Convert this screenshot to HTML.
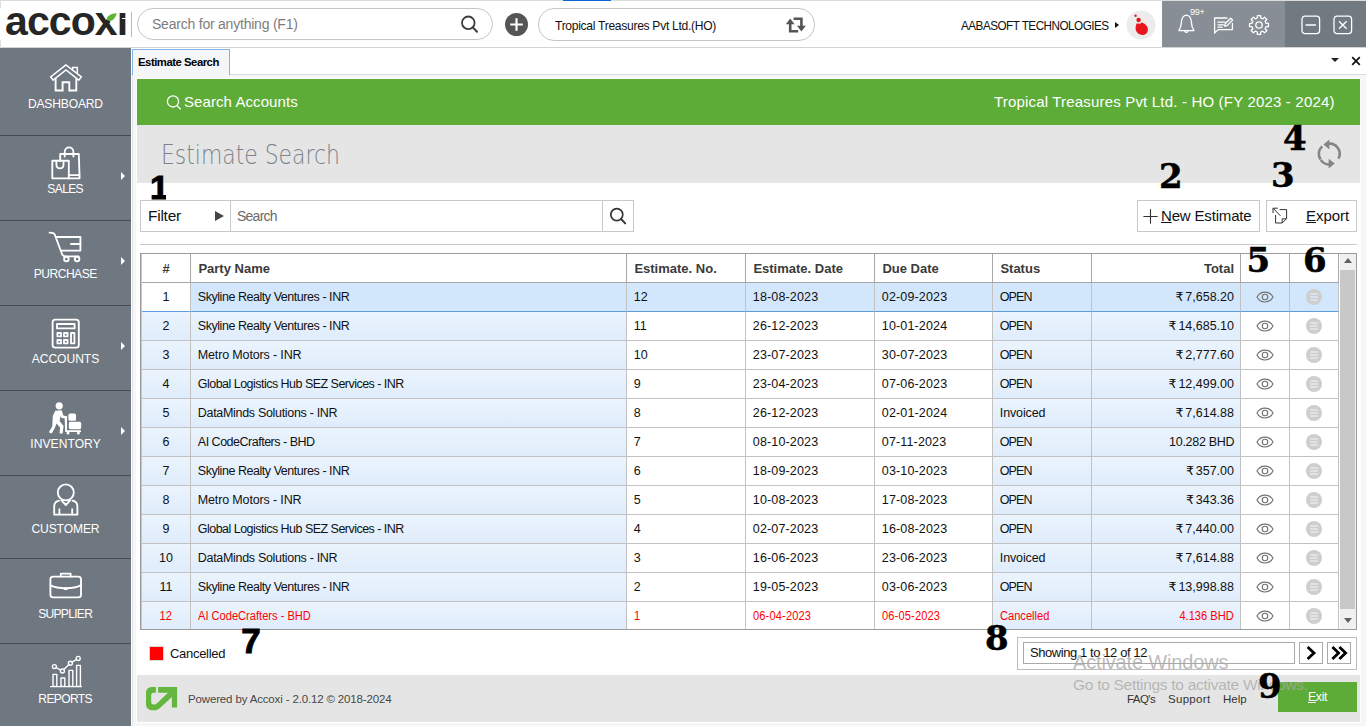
<!DOCTYPE html>
<html lang="en">
<head>
<meta charset="utf-8">
<title>Accoxi - Estimate Search</title>
<style>
*{box-sizing:border-box;margin:0;padding:0}
html,body{width:1366px;height:726px;overflow:hidden;background:#f5f6f8}
body{position:relative;font-family:"Liberation Sans","DejaVu Sans",sans-serif;color:#111;font-size:12.5px}
#app>div,#app>span,#app>svg{position:absolute}
.t{white-space:pre;line-height:1}
#topbar{left:0;top:0;width:1366px;height:48px;background:#fff;border-bottom:1px solid #d4d4d4;border-top:1px solid #dcdcdc}
#logo{left:5px;top:-2px;font-weight:bold;font-size:41px;letter-spacing:-0.9px;color:#262626;line-height:46px}
#logosep{left:131px;top:12px;width:1px;height:25px;background:#b9b9b9}
.pill{border:1px solid #c6c6c6;border-radius:16px;background:#fff}
#gsearch{left:137px;top:8px;width:356px;height:32px}
#company{left:538px;top:8px;width:277px;height:33px}
#bluebar{left:563px;top:0;width:48px;height:1px;background:#0a68d0}
#tr1{left:1162px;top:1px;width:123px;height:46px;background:#878e96}
#tr2{left:1285px;top:1px;width:81px;height:46px;background:#717981}
#side{left:0;top:48px;width:131px;height:678px;background:#6f7780}
.sdiv{left:0;width:131px;height:1px;background:#474b50}
.slabel{left:0;width:131px;text-align:center;color:#fff;font-size:13px;line-height:1;white-space:pre;transform:scaleX(0.93)}
.sarrow{left:121px;width:0;height:0;border-left:4px solid #fff;border-top:4px solid transparent;border-bottom:4px solid transparent}
#tabstrip{left:131px;top:48px;width:1235px;height:27px;background:#fff;border-bottom:1px solid #dadbdd}
#tab{left:132px;top:49px;width:98px;height:26px;background:#f5f6f8;border:1px solid #7eb4ea;border-bottom:none}
#panel{left:136px;top:78px;width:1225px;height:645px;background:#fff}
#green{left:137px;top:79px;width:1223px;height:46px;background:#5dac38}
#titleband{left:137px;top:125px;width:1223px;height:58px;background:#e5e5e5}
#footband{left:137px;top:675px;width:1223px;height:47px;background:#e5e5e5}
.box{border:1px solid #c8c8c8;background:#fff}
#grid{left:140px;top:253px;width:1217px;height:377px;border:1px solid #9b9b9b;background:#fff}
#gridl{left:141px;top:254px;width:1px;height:375px;background:#c6c6c6}
.cell{height:29px;border-right:1px solid #c2c2c2;border-bottom:1px solid #c2c2c2;line-height:28px;white-space:pre;overflow:hidden;padding-left:6.8px;font-size:12.5px;color:#111;background:#fff}
.hd{font-weight:bold;font-size:13px;line-height:29px;color:#3a3a3a;padding-left:7.4px;border-bottom:1px solid #a8a8a8;border-right:1px solid #a8a8a8}
.alt{background:linear-gradient(#ebf4fd,#dfecfb)}
.sel{background:#d3e7fc;border-bottom:1px solid #5c9ee0}
.selw{border-bottom:1px solid #5c9ee0}
.c{text-align:center;padding-left:0}
.r{text-align:right;padding-left:0;padding-right:6px}
.ic{padding-left:0;text-align:center}
.ic svg{vertical-align:middle;position:relative;top:-1px}
.red{color:#f00}
.kd,.ku{letter-spacing:0.15px}
.ru{font-size:12.5px;margin-right:-1.6px;font-family:'DejaVu Sans','Liberation Sans',sans-serif}
.rx{display:inline-block;font-size:12px;transform:scaleX(0.925);transform-origin:0 50%}
.r .rx{transform-origin:100% 50%}
.c .rx{transform-origin:50% 50%}
.num{font-family:"DejaVu Serif","Liberation Serif",serif;font-weight:bold;color:#000;line-height:1;white-space:pre;;font-size:34px;-webkit-text-stroke:0.5px #000}
.numsans{font-weight:bold;color:#000;line-height:1;white-space:pre;-webkit-text-stroke:1px #000}

.last{height:27px;border-bottom:none;line-height:28px}

</style>
</head>
<body>
<div id="app">
<!-- TOPBAR -->
<div id="topbar"></div><div id="bluebar"></div>
<div style="left:0;top:0;width:1px;height:8px;background:#dedede"></div><div style="left:0;top:40px;width:1px;height:8px;background:#dedede"></div>
<span id="logo" class="t">accoxi</span>
<div style="left:117px;top:2px;width:10px;height:10.6px;background:#fff"></div>
<div style="left:122.2px;top:18px;width:5px;height:1.4px;background:#fff"></div>
<svg id="leaf" style="left:100px;top:5px" width="22" height="32" viewBox="0 0 22 32"><path d="M5 7.7 H19.05 V29.5 H18.1 Z" fill="#fff"/><path d="M6.8 14.4 C7.2 11 10 8.4 16.9 8.2 C15.6 12 13 16.4 9.4 15.9 C8.2 15.7 7.4 15.2 6.8 14.4 Z" fill="#5cb535"/></svg>
<div id="logosep"></div>
<div id="gsearch" class="pill"></div>
<span class="t" style="left:152px;top:17px;font-size:14px;color:#7d7d7d;letter-spacing:-0.22px">Search for anything (F1)</span>
<svg style="left:458px;top:13px" width="22" height="22" viewBox="0 0 22 22"><circle cx="10.3" cy="9.8" r="6.3" fill="none" stroke="#3d3d3d" stroke-width="1.8"/><path d="M14.8 14.4 L19 18.8" stroke="#3d3d3d" stroke-width="2" stroke-linecap="round"/></svg>
<svg style="left:504px;top:12px" width="25" height="25" viewBox="0 0 25 25"><circle cx="12.5" cy="12.5" r="11.5" fill="#555"/><path d="M12.5 6.2 V18.8 M6.2 12.5 H18.8" stroke="#fff" stroke-width="2.2"/></svg>
<div id="company" class="pill"></div>
<span class="t" style="left:555px;top:19px;font-size:13px;color:#111;transform-origin:0 0;transform:scaleX(0.93);letter-spacing:-0.32px">Tropical Treasures Pvt Ltd.(HO)</span>
<svg style="left:785px;top:15px" width="22" height="20" viewBox="0 0 22 20"><g fill="none" stroke="#555" stroke-width="2.6" stroke-linejoin="round"><path d="M5.2 16.2 H13.2 M5.2 17.4 V8.2"/><path d="M16.4 2.6 V11.8 M16.4 3.8 H8.6"/></g><path d="M0.8 9.2 L5.2 3.6 L9.6 9.2 Z M12 10.8 L16.4 16.6 L20.8 10.8 Z" fill="#555"/></svg>
<span class="t" style="left:961px;top:19px;font-size:13px;color:#111;transform-origin:0 0;transform:scaleX(0.9);letter-spacing:-0.56px">AABASOFT TECHNOLOGIES</span>
<div style="left:1115px;top:21.5px;width:0;height:0;border-left:4.5px solid #111;border-top:3.5px solid transparent;border-bottom:3.5px solid transparent"></div>
<svg style="left:1126px;top:10px" width="30" height="30" viewBox="0 0 30 30"><circle cx="15" cy="15" r="14.5" fill="#ececec"/><path d="M11.6 12.6 C14.4 11.4 19.4 12.6 21.4 17 C23 21 20.6 24.8 17 25 C12.6 25.2 9.4 22 9.6 17.6 C9.7 15.4 10.4 13.6 11.6 12.6 Z" fill="#e8161c"/><circle cx="13" cy="10.6" r="3.1" fill="#ececec"/><circle cx="12.6" cy="10" r="2.2" fill="#e8161c"/><circle cx="9.6" cy="5.8" r="1.2" fill="#e8161c"/></svg>
<div id="tr1"></div><div id="tr2"></div>
<svg style="left:1176px;top:13px" width="22" height="23" viewBox="0 0 22 23"><g fill="none" stroke="#fff" stroke-width="1.3" stroke-linejoin="round" stroke-linecap="round"><path d="M10.4 2.2 C6.6 2.6 5.6 6 5.4 9.4 C5.2 13 4.6 15.4 2.8 17.6 H18 C16.2 15.4 15.6 13 15.4 9.4 C15.2 6 14.2 2.6 10.4 2.2 Z"/><path d="M8.8 18.2 C9 19.8 11.8 19.8 12 18.2"/></g></svg>
<span class="t" style="left:1190px;top:8px;font-size:9px;color:#fff;letter-spacing:-0.2px">99+</span>
<svg style="left:1213px;top:16px" width="22" height="19" viewBox="0 0 22 19"><g fill="none" stroke="#fff" stroke-width="1.3" stroke-linejoin="round" stroke-linecap="round"><path d="M14 2 H1.6 V17 L5.2 13.6 H19.4 V7.4"/><path d="M5 6.2 H12 M5 8.8 H10.4 M5 11.2 H9"/><path d="M11.6 10.2 L12.2 7.8 L17.6 2.2 L19.6 4 L14.2 9.6 Z"/></g></svg>
<svg style="left:1247px;top:13px" width="24" height="24" viewBox="0 0 24 24"><path d="M10.35 2.54 L13.65 2.54 L13.68 5.00 L15.76 5.86 L17.52 4.15 L19.85 6.48 L18.14 8.24 L19.00 10.32 L21.46 10.35 L21.46 13.65 L19.00 13.68 L18.14 15.76 L19.85 17.52 L17.52 19.85 L15.76 18.14 L13.68 19.00 L13.65 21.46 L10.35 21.46 L10.32 19.00 L8.24 18.14 L6.48 19.85 L4.15 17.52 L5.86 15.76 L5.00 13.68 L2.54 13.65 L2.54 10.35 L5.00 10.32 L5.86 8.24 L4.15 6.48 L6.48 4.15 L8.24 5.86 L10.32 5.00 Z" fill="none" stroke="#fff" stroke-width="1.3" stroke-linejoin="round"/><circle cx="12" cy="12" r="3.2" fill="none" stroke="#fff" stroke-width="1.3"/></svg>
<svg style="left:1301px;top:15px" width="20" height="20" viewBox="0 0 20 20"><rect x="1" y="1.2" width="17.6" height="17.4" rx="3" fill="none" stroke="#fff" stroke-width="1.3"/><path d="M4.6 10 H15" stroke="#fff" stroke-width="1.5"/></svg>
<svg style="left:1333px;top:15px" width="20" height="20" viewBox="0 0 20 20"><rect x="1" y="1.2" width="17.6" height="17.4" rx="3" fill="none" stroke="#fff" stroke-width="1.3"/><path d="M6 6.2 L13.6 13.8 M13.6 6.2 L6 13.8" stroke="#fff" stroke-width="1.3"/></svg>
<!-- SIDEBAR -->
<div id="side"></div>
<div style="left:131px;top:75px;width:1px;height:651px;background:#fff"></div><div style="left:132px;top:75px;width:1px;height:651px;background:#e3e4e7"></div>
<div class="sdiv" style="top:135px"></div>
<div class="sdiv" style="top:220px"></div>
<div class="sdiv" style="top:305px"></div>
<div class="sdiv" style="top:390px"></div>
<div class="sdiv" style="top:475px"></div>
<div class="sdiv" style="top:558px"></div>
<div class="sdiv" style="top:643px"></div>
<span class="slabel" style="top:97px;letter-spacing:-0.19px;padding-right:0.19px">DASHBOARD</span>
<span class="slabel" style="top:182px;letter-spacing:-0.71px;padding-right:0.71px">SALES</span>
<span class="slabel" style="top:267px;letter-spacing:-0.56px;padding-right:0.56px">PURCHASE</span>
<span class="slabel" style="top:352px;letter-spacing:-0.05px;padding-right:0.05px">ACCOUNTS</span>
<span class="slabel" style="top:437px;letter-spacing:0.05px;padding-right:0.00px">INVENTORY</span>
<span class="slabel" style="top:522px;letter-spacing:-0.13px;padding-right:0.13px">CUSTOMER</span>
<span class="slabel" style="top:607px;letter-spacing:-0.78px;padding-right:0.78px">SUPPLIER</span>
<span class="slabel" style="top:692px;letter-spacing:-0.71px;padding-right:0.71px">REPORTS</span>
<div class="sarrow" style="top:172px"></div>
<div class="sarrow" style="top:257px"></div>
<div class="sarrow" style="top:342px"></div>
<div class="sarrow" style="top:427px"></div>
<svg style="left:48px;top:63px" width="36" height="30" viewBox="0 0 36 30"><g fill="none" stroke="#fff" stroke-width="1.5" stroke-linejoin="miter" stroke-linecap="butt"><path d="M17.95 1.9 L2.7 13.9 L5.1 17.2 L17.95 6.9 L30.8 17.2 L33.4 13.9 Z"/><path d="M24.6 7.2 V4.4 H29.3 V10.6"/><path d="M7.6 15.4 V27.5 H14.6 V19.3 H21.3 V27.5 H28.3 V15.4" stroke-width="1.9"/></g></svg>
<svg style="left:50px;top:145px" width="32" height="36" viewBox="0 0 32 36"><g fill="none" stroke="#fff" stroke-width="1.85" stroke-linejoin="round" stroke-linecap="round"><path d="M10.2 15.7 V9 H28.8 L29.6 33.4 H18.8"/><path d="M14.7 11.5 V7 C14.7 0.9 23.4 0.9 23.4 7 V11.5"/><path d="M2.3 15.7 H18.8 V33.4 H2.3 Z"/><path d="M6.4 17 V19.4 C6.4 24.6 13.5 24.6 13.5 19.4 V17"/><path d="M18.8 30.1 H29.3"/></g></svg>
<svg style="left:48px;top:231px" width="38" height="34" viewBox="0 0 38 34"><g fill="none" stroke="#fff" stroke-width="1.85" stroke-linejoin="round" stroke-linecap="round"><path d="M1.6 1.6 L5.4 2.2 L6.6 3.2 L14.4 24 L16.6 25.4 H30.6"/><path d="M8.6 6 H32.4 V19.6 H13.4"/><path d="M32.4 13 H22.9"/><circle cx="18.4" cy="28" r="2.3"/><circle cx="29.1" cy="28" r="2.3"/></g></svg>
<svg style="left:50px;top:316.6px" width="32" height="34" viewBox="0 0 32 34"><g fill="none" stroke="#fff" stroke-width="1.85" stroke-linejoin="round" stroke-linecap="round"><rect x="2.6" y="2.6" width="26.2" height="28" rx="2.6"/><rect x="7" y="7" width="17.6" height="4.4"/><rect x="7.4" y="16" width="3.6" height="3.4"/><rect x="14" y="16" width="3.6" height="3.4"/><rect x="7.4" y="23" width="3.6" height="3.4"/><rect x="14" y="23" width="3.6" height="3.4"/><rect x="21" y="16" width="3.4" height="10.4"/></g></svg>
<svg style="left:48px;top:401px" width="36" height="34" viewBox="0 0 36 34" fill="#fff"><circle cx="11.2" cy="4.8" r="3.6"/><path d="M7.2 9.8 L13.6 9.2 L15.4 14.4 L19.4 15.4 L19 17.8 L13.6 17 L12.6 15 L11.6 20 L15.6 25 L14.6 32.6 L11.6 32.6 L12 26.4 L8.6 22.6 L6.6 27.6 L3.6 32.6 L0.8 31.2 L4.2 25.4 L4.8 15 Z"/><rect x="20.4" y="12.6" width="7.6" height="7.2" rx="1.6"/><rect x="20.8" y="20.8" width="12.4" height="7.4" rx="1.6"/><path d="M16.6 15.4 H19 V29.2 H33 V31 H17.2 Z"/><circle cx="20" cy="32" r="1.5"/><circle cx="30.4" cy="32" r="1.5"/></svg>
<svg style="left:50px;top:482px" width="32" height="36" viewBox="0 0 32 36"><g fill="none" stroke="#fff" stroke-width="1.85" stroke-linejoin="round" stroke-linecap="round"><circle cx="15.8" cy="10.4" r="8"/><path d="M9 18.6 C5.2 19.4 4.2 21.4 4.2 24.4 V32.6 H27.4 V24.4 C27.4 21.4 26.4 19.4 22.6 18.6"/><path d="M11.4 18.4 L15.8 23 L20.2 18.4"/><path d="M9.4 27.2 V32.4 M22.2 27.2 V32.4"/></g></svg>
<svg style="left:48px;top:570px" width="36" height="30" viewBox="0 0 36 30"><g fill="none" stroke="#fff" stroke-width="1.85" stroke-linejoin="round" stroke-linecap="round"><rect x="2.4" y="6.6" width="30.6" height="20.8" rx="2.6"/><path d="M12.8 6.4 V3.6 H22.6 V6.4"/><path d="M2.6 15.4 C10 19.2 25.4 19.2 32.8 15.4"/><path d="M16.6 18.6 H18.8" stroke-width="2.6"/></g></svg>
<svg style="left:48px;top:654px" width="36" height="36" viewBox="0 0 36 36"><g fill="none" stroke="#fff" stroke-width="1.4" stroke-linejoin="round" stroke-linecap="round"><path d="M2.6 32.6 H33.4"/><rect x="5" y="20.4" width="3.8" height="12"/><rect x="13" y="24" width="3.8" height="8.4"/><rect x="21" y="16.4" width="3.8" height="16"/><rect x="28.6" y="11.4" width="3.8" height="21"/><circle cx="6.4" cy="12.6" r="2"/><circle cx="14.4" cy="17" r="2"/><circle cx="22.4" cy="9.2" r="2"/><circle cx="30.2" cy="4.4" r="2"/><path d="M8.2 13.6 L12.6 16 M15.8 15.6 L21 10.6 M24 8.2 L28.6 5.4"/></g></svg>
<!-- TABSTRIP -->
<div id="tabstrip"></div><div id="tab"></div>
<span class="t" style="left:138px;top:57px;font-size:11.3px;font-weight:bold;color:#000;letter-spacing:-0.47px">Estimate Search</span>
<div style="left:1331px;top:58px;width:0;height:0;border-top:4px solid #222;border-left:4px solid transparent;border-right:4px solid transparent"></div>
<svg style="left:1350px;top:55px" width="12" height="12" viewBox="0 0 12 12"><path d="M2.2 2.2 L9.8 9.8 M9.8 2.2 L2.2 9.8" stroke="#111" stroke-width="1.7"/></svg>
<!-- PANEL -->
<div id="panel"></div><div id="green"></div><div id="titleband"></div><div id="footband"></div>
<svg style="left:165px;top:93px" width="18" height="18" viewBox="0 0 18 18"><circle cx="8" cy="8.4" r="5.6" fill="none" stroke="#fff" stroke-width="1.3"/><path d="M12 12.6 L15.4 16" stroke="#fff" stroke-width="1.3" stroke-linecap="round"/></svg>
<span class="t" style="left:184px;top:94px;font-size:15px;color:#fff;letter-spacing:0.08px">Search Accounts</span>
<span class="t" style="left:994px;top:94px;font-size:15px;color:#fff;letter-spacing:0.18px">Tropical Treasures Pvt Ltd. - HO (FY 2023 - 2024)</span>
<span class="t" style="left:161px;top:142px;font-family:'DejaVu Sans','Liberation Sans',sans-serif;font-weight:200;font-size:26px;color:#7b838b;transform:scaleX(0.842);transform-origin:0 0">Estimate Search</span>
<svg style="left:1314px;top:139px" width="30" height="30" viewBox="0 0 30 30"><g fill="none" stroke="#858585" stroke-width="2.6"><path d="M6.6 20.6 A10 10 0 0 1 8.2 7.4"/><path d="M13.4 5 A10 10 0 0 1 24.4 19.6" /><path d="M6.8 21 A10 10 0 0 0 18 25"/></g><path d="M15.4 0.6 L15.4 10.4 L9.4 5.4 Z" fill="#858585"/><path d="M14.6 19.8 L14.6 29.6 L20.8 24.6 Z" fill="#858585"/></svg>
<div class="box" style="left:140px;top:200px;width:494px;height:32px"></div>
<div style="left:230px;top:201px;width:1px;height:30px;background:#c8c8c8"></div>
<div style="left:602px;top:201px;width:1px;height:30px;background:#c8c8c8"></div>
<span class="t" style="left:148px;top:208px;font-size:15.5px;color:#111;letter-spacing:-0.25px">Filter</span>
<div style="left:215px;top:211px;width:0;height:0;border-left:9px solid #444;border-top:5px solid transparent;border-bottom:5px solid transparent"></div>
<span class="t" style="left:237px;top:209px;font-size:14px;color:#6a6a6a;letter-spacing:-0.75px">Search</span>
<svg style="left:607px;top:205px" width="22" height="22" viewBox="0 0 22 22"><circle cx="9.8" cy="9.6" r="6" fill="none" stroke="#333" stroke-width="1.7"/><path d="M14 14 L18.2 18.4" stroke="#333" stroke-width="1.9" stroke-linecap="round"/></svg>
<div class="box" style="left:1137px;top:200px;width:123px;height:32px"></div>
<svg style="left:1142px;top:208px" width="17" height="17" viewBox="0 0 17 17"><path d="M8.5 1.2 V15.8 M1.4 8.5 H15.6" stroke="#333" stroke-width="1.1"/></svg>
<span class="t" style="left:1161px;top:208px;font-size:15px;color:#111;letter-spacing:-0.17px"><u>N</u>ew Estimate</span>
<div class="box" style="left:1266px;top:200px;width:91px;height:32px"></div>
<svg style="left:1271px;top:206px" width="18" height="19" viewBox="0 0 18 19"><g fill="none" stroke="#333" stroke-width="1"><path d="M8.6 3.6 H15.6 V12.6 L11.2 17 H4.6 V9"/><path d="M15.4 12.8 H11.2 V17"/><path d="M2.2 2.4 L9.4 9.8 M2 7 V2.2 H6.8"/></g></svg>
<span class="t" style="left:1306px;top:208px;font-size:15px;color:#111;letter-spacing:-0.05px"><u>E</u>xport</span>
<div style="left:140px;top:244px;width:1217px;height:1px;background:#c9c9c9"></div>
<!-- TABLE -->
<div id="grid"></div><div id="gridl"></div>
<div class="cell hd c" style="left:142px;top:254px;width:49px">#</div>
<div class="cell hd" style="left:191px;top:254px;width:436px">Party Name</div>
<div class="cell hd" style="left:627px;top:254px;width:119px">Estimate. No.</div>
<div class="cell hd" style="left:746px;top:254px;width:129px">Estimate. Date</div>
<div class="cell hd" style="left:875px;top:254px;width:118px">Due Date</div>
<div class="cell hd" style="left:993px;top:254px;width:99px">Status</div>
<div class="cell hd r" style="left:1092px;top:254px;width:149px">Total</div>
<div class="cell hd" style="left:1241px;top:254px;width:49px"></div>
<div class="cell hd" style="left:1290px;top:254px;width:49px"></div>
<div class="cell selw c kn" style="left:142px;top:283px;width:49px">1</div>
<div class="cell sel kp" style="left:191px;top:283px;width:436px"><span style="letter-spacing:-0.454px">Skyline Realty Ventures - INR</span></div>
<div class="cell sel ke" style="left:627px;top:283px;width:119px">12</div>
<div class="cell sel kd" style="left:746px;top:283px;width:129px">18-08-2023</div>
<div class="cell sel ku" style="left:875px;top:283px;width:118px">02-09-2023</div>
<div class="cell sel ks" style="left:993px;top:283px;width:99px"><span style="letter-spacing:-0.934px">OPEN</span></div>
<div class="cell sel r kt" style="left:1092px;top:283px;width:149px"><span class="ru">₹</span> 7,658.20</div>
<div class="cell sel ic kv" style="left:1241px;top:283px;width:49px"><svg width="18" height="12" viewBox="0 0 18 12"><path d="M1 6 C4.4 -0.6 13.6 -0.6 17 6 C13.6 12.6 4.4 12.6 1 6 Z" fill="none" stroke="#727272" stroke-width="1.15" stroke-linejoin="round"/><circle cx="9" cy="6" r="2.75" fill="none" stroke="#727272" stroke-width="1.15"/></svg></div>
<div class="cell sel ic km" style="left:1290px;top:283px;width:49px"><svg width="16" height="16" viewBox="0 0 16 16"><circle cx="8" cy="8" r="8" fill="#cecece"/><path d="M4.2 5 H11.8 M4.2 8 H11.8 M4.2 11 H11.8" stroke="#dde9f6" stroke-width="1.5"/></svg></div>
<div class="cell alt c kn" style="left:142px;top:312px;width:49px">2</div>
<div class="cell alt kp" style="left:191px;top:312px;width:436px"><span style="letter-spacing:-0.454px">Skyline Realty Ventures - INR</span></div>
<div class="cell ke" style="left:627px;top:312px;width:119px">11</div>
<div class="cell kd" style="left:746px;top:312px;width:129px">26-12-2023</div>
<div class="cell ku" style="left:875px;top:312px;width:118px">10-01-2024</div>
<div class="cell alt ks" style="left:993px;top:312px;width:99px"><span style="letter-spacing:-0.934px">OPEN</span></div>
<div class="cell alt r kt" style="left:1092px;top:312px;width:149px"><span class="ru">₹</span> 14,685.10</div>
<div class="cell ic kv" style="left:1241px;top:312px;width:49px"><svg width="18" height="12" viewBox="0 0 18 12"><path d="M1 6 C4.4 -0.6 13.6 -0.6 17 6 C13.6 12.6 4.4 12.6 1 6 Z" fill="none" stroke="#727272" stroke-width="1.15" stroke-linejoin="round"/><circle cx="9" cy="6" r="2.75" fill="none" stroke="#727272" stroke-width="1.15"/></svg></div>
<div class="cell ic km" style="left:1290px;top:312px;width:49px"><svg width="16" height="16" viewBox="0 0 16 16"><circle cx="8" cy="8" r="8" fill="#cecece"/><path d="M4.2 5 H11.8 M4.2 8 H11.8 M4.2 11 H11.8" stroke="#e9e9e9" stroke-width="1.5"/></svg></div>
<div class="cell alt c kn" style="left:142px;top:341px;width:49px">3</div>
<div class="cell alt kp" style="left:191px;top:341px;width:436px"><span style="letter-spacing:-0.148px">Metro Motors - INR</span></div>
<div class="cell ke" style="left:627px;top:341px;width:119px">10</div>
<div class="cell kd" style="left:746px;top:341px;width:129px">23-07-2023</div>
<div class="cell ku" style="left:875px;top:341px;width:118px">30-07-2023</div>
<div class="cell alt ks" style="left:993px;top:341px;width:99px"><span style="letter-spacing:-0.934px">OPEN</span></div>
<div class="cell alt r kt" style="left:1092px;top:341px;width:149px"><span class="ru">₹</span> 2,777.60</div>
<div class="cell ic kv" style="left:1241px;top:341px;width:49px"><svg width="18" height="12" viewBox="0 0 18 12"><path d="M1 6 C4.4 -0.6 13.6 -0.6 17 6 C13.6 12.6 4.4 12.6 1 6 Z" fill="none" stroke="#727272" stroke-width="1.15" stroke-linejoin="round"/><circle cx="9" cy="6" r="2.75" fill="none" stroke="#727272" stroke-width="1.15"/></svg></div>
<div class="cell ic km" style="left:1290px;top:341px;width:49px"><svg width="16" height="16" viewBox="0 0 16 16"><circle cx="8" cy="8" r="8" fill="#cecece"/><path d="M4.2 5 H11.8 M4.2 8 H11.8 M4.2 11 H11.8" stroke="#e9e9e9" stroke-width="1.5"/></svg></div>
<div class="cell alt c kn" style="left:142px;top:370px;width:49px">4</div>
<div class="cell alt kp" style="left:191px;top:370px;width:436px"><span style="letter-spacing:-0.525px">Global Logistics Hub SEZ Services - INR</span></div>
<div class="cell ke" style="left:627px;top:370px;width:119px">9</div>
<div class="cell kd" style="left:746px;top:370px;width:129px">23-04-2023</div>
<div class="cell ku" style="left:875px;top:370px;width:118px">07-06-2023</div>
<div class="cell alt ks" style="left:993px;top:370px;width:99px"><span style="letter-spacing:-0.934px">OPEN</span></div>
<div class="cell alt r kt" style="left:1092px;top:370px;width:149px"><span class="ru">₹</span> 12,499.00</div>
<div class="cell ic kv" style="left:1241px;top:370px;width:49px"><svg width="18" height="12" viewBox="0 0 18 12"><path d="M1 6 C4.4 -0.6 13.6 -0.6 17 6 C13.6 12.6 4.4 12.6 1 6 Z" fill="none" stroke="#727272" stroke-width="1.15" stroke-linejoin="round"/><circle cx="9" cy="6" r="2.75" fill="none" stroke="#727272" stroke-width="1.15"/></svg></div>
<div class="cell ic km" style="left:1290px;top:370px;width:49px"><svg width="16" height="16" viewBox="0 0 16 16"><circle cx="8" cy="8" r="8" fill="#cecece"/><path d="M4.2 5 H11.8 M4.2 8 H11.8 M4.2 11 H11.8" stroke="#e9e9e9" stroke-width="1.5"/></svg></div>
<div class="cell alt c kn" style="left:142px;top:399px;width:49px">5</div>
<div class="cell alt kp" style="left:191px;top:399px;width:436px"><span style="letter-spacing:-0.311px">DataMinds Solutions - INR</span></div>
<div class="cell ke" style="left:627px;top:399px;width:119px">8</div>
<div class="cell kd" style="left:746px;top:399px;width:129px">26-12-2023</div>
<div class="cell ku" style="left:875px;top:399px;width:118px">02-01-2024</div>
<div class="cell alt ks" style="left:993px;top:399px;width:99px"><span style="letter-spacing:-0.133px">Invoiced</span></div>
<div class="cell alt r kt" style="left:1092px;top:399px;width:149px"><span class="ru">₹</span> 7,614.88</div>
<div class="cell ic kv" style="left:1241px;top:399px;width:49px"><svg width="18" height="12" viewBox="0 0 18 12"><path d="M1 6 C4.4 -0.6 13.6 -0.6 17 6 C13.6 12.6 4.4 12.6 1 6 Z" fill="none" stroke="#727272" stroke-width="1.15" stroke-linejoin="round"/><circle cx="9" cy="6" r="2.75" fill="none" stroke="#727272" stroke-width="1.15"/></svg></div>
<div class="cell ic km" style="left:1290px;top:399px;width:49px"><svg width="16" height="16" viewBox="0 0 16 16"><circle cx="8" cy="8" r="8" fill="#cecece"/><path d="M4.2 5 H11.8 M4.2 8 H11.8 M4.2 11 H11.8" stroke="#e9e9e9" stroke-width="1.5"/></svg></div>
<div class="cell alt c kn" style="left:142px;top:428px;width:49px">6</div>
<div class="cell alt kp" style="left:191px;top:428px;width:436px"><span style="letter-spacing:-0.492px">AI CodeCrafters - BHD</span></div>
<div class="cell ke" style="left:627px;top:428px;width:119px">7</div>
<div class="cell kd" style="left:746px;top:428px;width:129px">08-10-2023</div>
<div class="cell ku" style="left:875px;top:428px;width:118px">07-11-2023</div>
<div class="cell alt ks" style="left:993px;top:428px;width:99px"><span style="letter-spacing:-0.934px">OPEN</span></div>
<div class="cell alt r kt" style="left:1092px;top:428px;width:149px"><span style="letter-spacing:-0.291px;margin-right:-0.291px">10.282 BHD</span></div>
<div class="cell ic kv" style="left:1241px;top:428px;width:49px"><svg width="18" height="12" viewBox="0 0 18 12"><path d="M1 6 C4.4 -0.6 13.6 -0.6 17 6 C13.6 12.6 4.4 12.6 1 6 Z" fill="none" stroke="#727272" stroke-width="1.15" stroke-linejoin="round"/><circle cx="9" cy="6" r="2.75" fill="none" stroke="#727272" stroke-width="1.15"/></svg></div>
<div class="cell ic km" style="left:1290px;top:428px;width:49px"><svg width="16" height="16" viewBox="0 0 16 16"><circle cx="8" cy="8" r="8" fill="#cecece"/><path d="M4.2 5 H11.8 M4.2 8 H11.8 M4.2 11 H11.8" stroke="#e9e9e9" stroke-width="1.5"/></svg></div>
<div class="cell alt c kn" style="left:142px;top:457px;width:49px">7</div>
<div class="cell alt kp" style="left:191px;top:457px;width:436px"><span style="letter-spacing:-0.454px">Skyline Realty Ventures - INR</span></div>
<div class="cell ke" style="left:627px;top:457px;width:119px">6</div>
<div class="cell kd" style="left:746px;top:457px;width:129px">18-09-2023</div>
<div class="cell ku" style="left:875px;top:457px;width:118px">03-10-2023</div>
<div class="cell alt ks" style="left:993px;top:457px;width:99px"><span style="letter-spacing:-0.934px">OPEN</span></div>
<div class="cell alt r kt" style="left:1092px;top:457px;width:149px"><span class="ru">₹</span> 357.00</div>
<div class="cell ic kv" style="left:1241px;top:457px;width:49px"><svg width="18" height="12" viewBox="0 0 18 12"><path d="M1 6 C4.4 -0.6 13.6 -0.6 17 6 C13.6 12.6 4.4 12.6 1 6 Z" fill="none" stroke="#727272" stroke-width="1.15" stroke-linejoin="round"/><circle cx="9" cy="6" r="2.75" fill="none" stroke="#727272" stroke-width="1.15"/></svg></div>
<div class="cell ic km" style="left:1290px;top:457px;width:49px"><svg width="16" height="16" viewBox="0 0 16 16"><circle cx="8" cy="8" r="8" fill="#cecece"/><path d="M4.2 5 H11.8 M4.2 8 H11.8 M4.2 11 H11.8" stroke="#e9e9e9" stroke-width="1.5"/></svg></div>
<div class="cell alt c kn" style="left:142px;top:486px;width:49px">8</div>
<div class="cell alt kp" style="left:191px;top:486px;width:436px"><span style="letter-spacing:-0.148px">Metro Motors - INR</span></div>
<div class="cell ke" style="left:627px;top:486px;width:119px">5</div>
<div class="cell kd" style="left:746px;top:486px;width:129px">10-08-2023</div>
<div class="cell ku" style="left:875px;top:486px;width:118px">17-08-2023</div>
<div class="cell alt ks" style="left:993px;top:486px;width:99px"><span style="letter-spacing:-0.934px">OPEN</span></div>
<div class="cell alt r kt" style="left:1092px;top:486px;width:149px"><span class="ru">₹</span> 343.36</div>
<div class="cell ic kv" style="left:1241px;top:486px;width:49px"><svg width="18" height="12" viewBox="0 0 18 12"><path d="M1 6 C4.4 -0.6 13.6 -0.6 17 6 C13.6 12.6 4.4 12.6 1 6 Z" fill="none" stroke="#727272" stroke-width="1.15" stroke-linejoin="round"/><circle cx="9" cy="6" r="2.75" fill="none" stroke="#727272" stroke-width="1.15"/></svg></div>
<div class="cell ic km" style="left:1290px;top:486px;width:49px"><svg width="16" height="16" viewBox="0 0 16 16"><circle cx="8" cy="8" r="8" fill="#cecece"/><path d="M4.2 5 H11.8 M4.2 8 H11.8 M4.2 11 H11.8" stroke="#e9e9e9" stroke-width="1.5"/></svg></div>
<div class="cell alt c kn" style="left:142px;top:515px;width:49px">9</div>
<div class="cell alt kp" style="left:191px;top:515px;width:436px"><span style="letter-spacing:-0.525px">Global Logistics Hub SEZ Services - INR</span></div>
<div class="cell ke" style="left:627px;top:515px;width:119px">4</div>
<div class="cell kd" style="left:746px;top:515px;width:129px">02-07-2023</div>
<div class="cell ku" style="left:875px;top:515px;width:118px">16-08-2023</div>
<div class="cell alt ks" style="left:993px;top:515px;width:99px"><span style="letter-spacing:-0.934px">OPEN</span></div>
<div class="cell alt r kt" style="left:1092px;top:515px;width:149px"><span class="ru">₹</span> 7,440.00</div>
<div class="cell ic kv" style="left:1241px;top:515px;width:49px"><svg width="18" height="12" viewBox="0 0 18 12"><path d="M1 6 C4.4 -0.6 13.6 -0.6 17 6 C13.6 12.6 4.4 12.6 1 6 Z" fill="none" stroke="#727272" stroke-width="1.15" stroke-linejoin="round"/><circle cx="9" cy="6" r="2.75" fill="none" stroke="#727272" stroke-width="1.15"/></svg></div>
<div class="cell ic km" style="left:1290px;top:515px;width:49px"><svg width="16" height="16" viewBox="0 0 16 16"><circle cx="8" cy="8" r="8" fill="#cecece"/><path d="M4.2 5 H11.8 M4.2 8 H11.8 M4.2 11 H11.8" stroke="#e9e9e9" stroke-width="1.5"/></svg></div>
<div class="cell alt c kn" style="left:142px;top:544px;width:49px">10</div>
<div class="cell alt kp" style="left:191px;top:544px;width:436px"><span style="letter-spacing:-0.311px">DataMinds Solutions - INR</span></div>
<div class="cell ke" style="left:627px;top:544px;width:119px">3</div>
<div class="cell kd" style="left:746px;top:544px;width:129px">16-06-2023</div>
<div class="cell ku" style="left:875px;top:544px;width:118px">23-06-2023</div>
<div class="cell alt ks" style="left:993px;top:544px;width:99px"><span style="letter-spacing:-0.133px">Invoiced</span></div>
<div class="cell alt r kt" style="left:1092px;top:544px;width:149px"><span class="ru">₹</span> 7,614.88</div>
<div class="cell ic kv" style="left:1241px;top:544px;width:49px"><svg width="18" height="12" viewBox="0 0 18 12"><path d="M1 6 C4.4 -0.6 13.6 -0.6 17 6 C13.6 12.6 4.4 12.6 1 6 Z" fill="none" stroke="#727272" stroke-width="1.15" stroke-linejoin="round"/><circle cx="9" cy="6" r="2.75" fill="none" stroke="#727272" stroke-width="1.15"/></svg></div>
<div class="cell ic km" style="left:1290px;top:544px;width:49px"><svg width="16" height="16" viewBox="0 0 16 16"><circle cx="8" cy="8" r="8" fill="#cecece"/><path d="M4.2 5 H11.8 M4.2 8 H11.8 M4.2 11 H11.8" stroke="#e9e9e9" stroke-width="1.5"/></svg></div>
<div class="cell alt c kn" style="left:142px;top:573px;width:49px">11</div>
<div class="cell alt kp" style="left:191px;top:573px;width:436px"><span style="letter-spacing:-0.454px">Skyline Realty Ventures - INR</span></div>
<div class="cell ke" style="left:627px;top:573px;width:119px">2</div>
<div class="cell kd" style="left:746px;top:573px;width:129px">19-05-2023</div>
<div class="cell ku" style="left:875px;top:573px;width:118px">03-06-2023</div>
<div class="cell alt ks" style="left:993px;top:573px;width:99px"><span style="letter-spacing:-0.934px">OPEN</span></div>
<div class="cell alt r kt" style="left:1092px;top:573px;width:149px"><span class="ru">₹</span> 13,998.88</div>
<div class="cell ic kv" style="left:1241px;top:573px;width:49px"><svg width="18" height="12" viewBox="0 0 18 12"><path d="M1 6 C4.4 -0.6 13.6 -0.6 17 6 C13.6 12.6 4.4 12.6 1 6 Z" fill="none" stroke="#727272" stroke-width="1.15" stroke-linejoin="round"/><circle cx="9" cy="6" r="2.75" fill="none" stroke="#727272" stroke-width="1.15"/></svg></div>
<div class="cell ic km" style="left:1290px;top:573px;width:49px"><svg width="16" height="16" viewBox="0 0 16 16"><circle cx="8" cy="8" r="8" fill="#cecece"/><path d="M4.2 5 H11.8 M4.2 8 H11.8 M4.2 11 H11.8" stroke="#e9e9e9" stroke-width="1.5"/></svg></div>
<div class="cell alt c red last kn" style="left:142px;top:602px;width:49px"><span class="rx">12</span></div>
<div class="cell alt red last kp" style="left:191px;top:602px;width:436px"><span class="rx">AI CodeCrafters - BHD</span></div>
<div class="cell red last ke" style="left:627px;top:602px;width:119px"><span class="rx">1</span></div>
<div class="cell red last kd" style="left:746px;top:602px;width:129px"><span class="rx">06-04-2023</span></div>
<div class="cell red last ku" style="left:875px;top:602px;width:118px"><span class="rx">06-05-2023</span></div>
<div class="cell alt red last ks" style="left:993px;top:602px;width:99px"><span class="rx">Cancelled</span></div>
<div class="cell alt r red last kt" style="left:1092px;top:602px;width:149px"><span class="rx">4.136 BHD</span></div>
<div class="cell ic last kv" style="left:1241px;top:602px;width:49px"><svg width="18" height="12" viewBox="0 0 18 12"><path d="M1 6 C4.4 -0.6 13.6 -0.6 17 6 C13.6 12.6 4.4 12.6 1 6 Z" fill="none" stroke="#727272" stroke-width="1.15" stroke-linejoin="round"/><circle cx="9" cy="6" r="2.75" fill="none" stroke="#727272" stroke-width="1.15"/></svg></div>
<div class="cell ic last km" style="left:1290px;top:602px;width:49px"><svg width="16" height="16" viewBox="0 0 16 16"><circle cx="8" cy="8" r="8" fill="#cecece"/><path d="M4.2 5 H11.8 M4.2 8 H11.8 M4.2 11 H11.8" stroke="#e9e9e9" stroke-width="1.5"/></svg></div>
<div style="left:1339px;top:254px;width:17px;height:375px;background:#f0f0f0;border-left:1px solid #fff"></div>
<div style="left:1340px;top:270px;width:15px;height:339px;background:#c8c8c8"></div>
<div style="left:1344px;top:258px;width:0;height:0;border-bottom:5px solid #606060;border-left:4.5px solid transparent;border-right:4.5px solid transparent"></div>
<div style="left:1344px;top:618px;width:0;height:0;border-top:5px solid #606060;border-left:4.5px solid transparent;border-right:4.5px solid transparent"></div>
<!-- BOTTOM -->
<div style="left:149px;top:646px;width:15px;height:15px;background:#f00;border:1px solid #d9d9d9"></div>
<span class="t" style="left:170px;top:647px;font-size:13px;color:#111;letter-spacing:-0.3px">Cancelled</span>
<div class="box" style="left:1017px;top:637px;width:340px;height:33px;border-color:#bdbdbd"></div>
<div class="box" style="left:1023px;top:642px;width:272px;height:22px;border-color:#a9a9a9"></div>
<span class="t" style="left:1030px;top:646px;font-size:13px;color:#111;letter-spacing:-0.42px">Showing 1 to 12 of 12</span>
<div class="box" style="left:1299px;top:642px;width:24px;height:22px;border-color:#a9a9a9"></div>
<div class="box" style="left:1327px;top:642px;width:24px;height:22px;border-color:#a9a9a9"></div>
<svg style="left:1303px;top:645px" width="16" height="16" viewBox="0 0 16 16"><path d="M4.6 2 L11 8 L4.6 14" fill="none" stroke="#000" stroke-width="2.8"/></svg>
<svg style="left:1330px;top:645px" width="18" height="16" viewBox="0 0 18 16"><path d="M2.4 2 L8.6 8 L2.4 14 M9.4 2 L15.6 8 L9.4 14" fill="none" stroke="#000" stroke-width="2.8"/></svg>
<svg style="left:146px;top:686.8px" width="32" height="24" viewBox="0 0 32 24"><path d="M9.9 0 H5.4 A5.4 5.4 0 0 0 0 5.4 V17.6 A5.6 5.6 0 0 0 5.6 23.2 H8.6 C10.6 23.2 12 22.6 13.4 21.4 L25.9 9.9 V20.4 H31.1 V0 H12.1 V5.8 H22 L10.7 16.4 C10 17.1 9.2 17.4 8.2 17.4 H7.4 A2.2 2.2 0 0 1 5.2 15.2 V8 A2.2 2.2 0 0 1 7.4 5.8 H9.9 Z" fill="#64b63e"/></svg>
<span class="t" style="left:188px;top:693.5px;font-size:11.5px;color:#474747;letter-spacing:-0.15px">Powered by Accoxi - 2.0.12 © 2018-2024</span>
<span class="t" style="left:1127px;top:693.5px;font-size:11.5px;color:#333;letter-spacing:-0.55px">FAQ's</span>
<span class="t" style="left:1168px;top:693.5px;font-size:11.5px;color:#333;letter-spacing:0.30px">Support</span>
<span class="t" style="left:1223px;top:693.5px;font-size:11.5px;color:#333;letter-spacing:-0.01px">Help</span>
<div style="left:1277.5px;top:682px;width:79.5px;height:30px;background:#5dac38"></div>
<span class="t" style="left:1308px;top:691px;font-size:12.3px;color:#fff;letter-spacing:-0.35px"><u>E</u>xit</span>
<span class="t" style="left:1073px;top:652px;font-size:20px;color:rgba(168,168,168,0.78);letter-spacing:-0.15px">Activate Windows</span>
<span class="t" style="left:1073px;top:677px;font-size:15.5px;color:rgba(168,168,168,0.78);letter-spacing:-0.28px">Go to Settings to activate Windows.</span>
<!-- NUMBERS -->
<span class="num" id="n2" style="left:1159.0px;top:159.0px">2</span>
<span class="num" id="n3" style="left:1271.0px;top:158.0px">3</span>
<span class="num" id="n4" style="left:1283.0px;top:121.0px">4</span>
<span class="num" id="n5" style="left:1246.5px;top:243.0px">5</span>
<span class="num" id="n6" style="left:1303.0px;top:243.0px">6</span>
<span class="num" id="n8" style="left:985.0px;top:621.0px">8</span>
<span class="num" id="n9" style="left:1258.0px;top:668.5px">9</span>
<div style="left:148px;top:167px;width:17.6px;height:34px;overflow:hidden"><span class="numsans" id="n1" style="position:absolute;left:2px;top:3px;font-size:34px">1</span></div>
<span class="numsans" id="n7" style="left:241.3px;top:622.5px;font-size:35px">7</span>
</div>
</body>
</html>
